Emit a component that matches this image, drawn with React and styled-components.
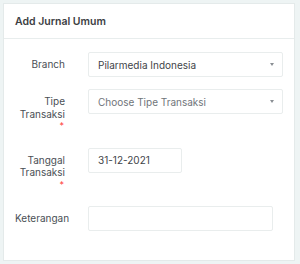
import React from "react";
import styled, { createGlobalStyle } from "styled-components";

const GlobalStyle = createGlobalStyle`
  html, body {
    margin: 0;
    padding: 0;
    background: #eef4f4;
  }
  body {
    font-family: Inter, "Noto Sans", sans-serif;
  }
`;

const Page = styled.div`
  width: 300px;
  height: 264px;
  padding: 3px 5px 0 3px;
  box-sizing: border-box;
`;

const Card = styled.div`
  background: #fff;
  border: 1px solid #e4eaea;
  box-sizing: border-box;
  height: 258px;
`;

const CardHeader = styled.div`
  height: 34px;
  border-bottom: 1px solid #e8eded;
  display: flex;
  align-items: center;
  padding: 0 11px;
  font-size: 10.5px;
  font-weight: 600;
  color: #3c4043;
`;

const CardBody = styled.div`
  padding: 13px 12px 0 11px;
`;

const Row = styled.div`
  display: grid;
  grid-template-columns: 50px 1fr;
  column-gap: 23px;
  align-items: start;
  margin-bottom: 12px;
`;

const Label = styled.div`
  text-align: right;
  font-size: 10px;
  line-height: 12.5px;
  color: #4a4f55;
  padding: 6px 0 3px;
  white-space: ${(p) => (p.$nowrap ? "nowrap" : "normal")};
`;

const Required = styled.span`
  display: block;
  color: #ff3b3b;
  font-size: 9px;
  padding-right: 1px;
`;

const Field = styled.div`
  height: 25px;
  width: ${(p) => p.$width}px;
  box-sizing: border-box;
  border: 1px solid #e9eded;
  border-radius: 2px;
  display: flex;
  align-items: center;
  justify-content: space-between;
  padding: 0 8px 0 9px;
  font-size: 10px;
  color: ${(p) => (p.$placeholder ? "#70757a" : "#3f4449")};
`;

const Caret = styled.span`
  width: 0;
  height: 0;
  border-left: 2.5px solid transparent;
  border-right: 2.5px solid transparent;
  border-top: 3.5px solid #8a8f94;
`;

export default function App() {
  return (
    <>
      <GlobalStyle />
      <Page>
        <Card>
          <CardHeader>Add Jurnal Umum</CardHeader>
          <CardBody>
            <Row>
              <Label>Branch</Label>
              <Field $width={195}>
                Pilarmedia Indonesia
                <Caret />
              </Field>
            </Row>
            <Row>
              <Label>
                Tipe Transaksi
                <Required>*</Required>
              </Label>
              <Field $width={195} $placeholder>
                Choose Tipe Transaksi
                <Caret />
              </Field>
            </Row>
            <Row>
              <Label>
                Tanggal Transaksi
                <Required>*</Required>
              </Label>
              <Field $width={94}>31-12-2021</Field>
            </Row>
            <Row>
              <Label $nowrap>Keterangan</Label>
              <Field $width={185} />
            </Row>
          </CardBody>
        </Card>
      </Page>
    </>
  );
}
